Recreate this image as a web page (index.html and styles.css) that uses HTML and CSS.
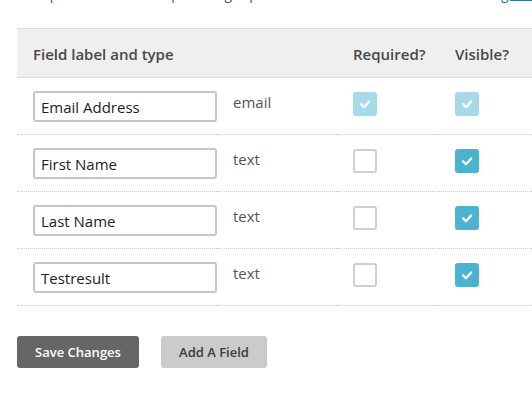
FILE: index.html
```html
<!DOCTYPE html>
<html lang="en">
<head>
<meta charset="utf-8">
<title>Custom fields</title>
<link rel="stylesheet" href="styles.css">
</head>
<body>
<div class="page">
  <p class="intro"><span class="intro-text">Set up the fields on the public signup form. Reorder them and then hit Save Changes to store the order.</span><a class="intro-link" href="#">guide to fields</a></p>

  <table class="fields">
    <colgroup>
      <col class="c-label"><col class="c-type"><col class="c-req"><col class="c-vis">
    </colgroup>
    <thead>
      <tr>
        <th>Field label and type</th>
        <th></th>
        <th>Required?</th>
        <th>Visible?</th>
      </tr>
    </thead>
    <tbody>
      <tr>
        <td class="cell-input"><input class="field-input" type="text" value="Email Address"></td>
        <td class="cell-type">email</td>
        <td class="cell-check"><span class="cb cb-on cb-locked"><svg viewBox="0 0 24 24" width="24" height="24"><path d="M8 12.3l3 3 5.2-5.8" fill="none" stroke="#fff" stroke-width="2.3" stroke-linecap="round" stroke-linejoin="round"/></svg></span></td>
        <td class="cell-check"><span class="cb cb-on cb-locked"><svg viewBox="0 0 24 24" width="24" height="24"><path d="M8 12.3l3 3 5.2-5.8" fill="none" stroke="#fff" stroke-width="2.3" stroke-linecap="round" stroke-linejoin="round"/></svg></span></td>
      </tr>
      <tr>
        <td class="cell-input"><input class="field-input" type="text" value="First Name"></td>
        <td class="cell-type">text</td>
        <td class="cell-check"><span class="cb"></span></td>
        <td class="cell-check"><span class="cb cb-on"><svg viewBox="0 0 24 24" width="24" height="24"><path d="M8 12.3l3 3 5.2-5.8" fill="none" stroke="#fff" stroke-width="2.3" stroke-linecap="round" stroke-linejoin="round"/></svg></span></td>
      </tr>
      <tr>
        <td class="cell-input"><input class="field-input" type="text" value="Last Name"></td>
        <td class="cell-type">text</td>
        <td class="cell-check"><span class="cb"></span></td>
        <td class="cell-check"><span class="cb cb-on"><svg viewBox="0 0 24 24" width="24" height="24"><path d="M8 12.3l3 3 5.2-5.8" fill="none" stroke="#fff" stroke-width="2.3" stroke-linecap="round" stroke-linejoin="round"/></svg></span></td>
      </tr>
      <tr>
        <td class="cell-input"><input class="field-input" type="text" value="Testresult"></td>
        <td class="cell-type">text</td>
        <td class="cell-check"><span class="cb"></span></td>
        <td class="cell-check"><span class="cb cb-on"><svg viewBox="0 0 24 24" width="24" height="24"><path d="M8 12.3l3 3 5.2-5.8" fill="none" stroke="#fff" stroke-width="2.3" stroke-linecap="round" stroke-linejoin="round"/></svg></span></td>
      </tr>
    </tbody>
  </table>

  <div class="actions">
    <button class="btn btn-primary" type="button">Save Changes</button>
    <button class="btn btn-secondary" type="button">Add A Field</button>
  </div>
</div>
</body>
</html>
```

FILE: styles.css
```css
html, body {
  margin: 0;
  padding: 0;
  background: #fff;
  overflow: hidden;
}

body {
  font-family: "Open Sans", "Liberation Sans", sans-serif;
  color: #444;
}

.page {
  padding-left: 17px;
  display: flex;
  flex-direction: column;
  align-items: flex-start;
}

.intro {
  margin: -16px 0 24px 0;
  width: 515px;
  overflow: hidden;
  font-size: 14px;
  line-height: 20px;
  color: #555;
  display: flex;
  white-space: nowrap;
}

.intro-text {
  display: block;
  flex: 0 0 484px;
  overflow: hidden;
}

.intro-link {
  flex: 0 0 auto;
  color: #2a7aa3;
  text-decoration: underline;
}

.fields {
  width: 515px;
  table-layout: fixed;
  border-collapse: collapse;
}

.c-label { width: 200px; }
.c-type { width: 120px; }
.c-req { width: 102px; }
.c-vis { width: 93px; }

.fields th {
  background: #efefef;
  border-top: 1px solid #dcdcdc;
  border-bottom: 1px solid #dcdcdc;
  padding: 15px 0 13px 16px;
  font-size: 15px;
  line-height: 20px;
  font-weight: 600;
  color: #484848;
  text-align: left;
  white-space: nowrap;
}

.fields td {
  border-bottom: 1px dotted #cccccc;
  padding: 0 0 0 16px;
  vertical-align: top;
  height: 57px;
  box-sizing: border-box;
}

.fields td.cell-input {
  padding-top: 13px;
}

.field-input {
  display: block;
  box-sizing: border-box;
  width: 184px;
  height: 31px;
  margin: 0;
  padding: 0 6px;
  border: 2px solid #c6c6c6;
  border-radius: 3px;
  font-family: "Open Sans", "Liberation Sans", sans-serif;
  font-size: 15px;
  color: #222;
  background: #fff;
  outline: none;
}

.fields td.cell-type {
  padding-top: 14px;
  font-size: 15px;
  line-height: 20px;
  color: #555;
}

.fields td.cell-check {
  padding-top: 14px;
}

.cb {
  display: block;
  box-sizing: border-box;
  width: 24px;
  height: 24px;
  border: 2px solid #d0d0d0;
  border-radius: 3px;
  background: #fff;
}

.cb svg {
  display: block;
  margin: -2px;
}

.cb-on {
  background: #4ab3d0;
  border-color: #4ab3d0;
}

.cb-locked {
  background: #a6dae8;
  border-color: #a6dae8;
}

.actions {
  display: flex;
  gap: 22px;
  margin-top: 30px;
}

.btn {
  height: 32px;
  border: 0;
  border-radius: 3px;
  padding: 0 18px;
  font-family: "Open Sans", "Liberation Sans", sans-serif;
  font-size: 13px;
  font-weight: 600;
  cursor: pointer;
}

.btn-primary {
  background: #666;
  color: #fff;
  width: 122px;
}

.btn-secondary {
  background: #cbcbcb;
  color: #3a3a3a;
  width: 106px;
}
```
